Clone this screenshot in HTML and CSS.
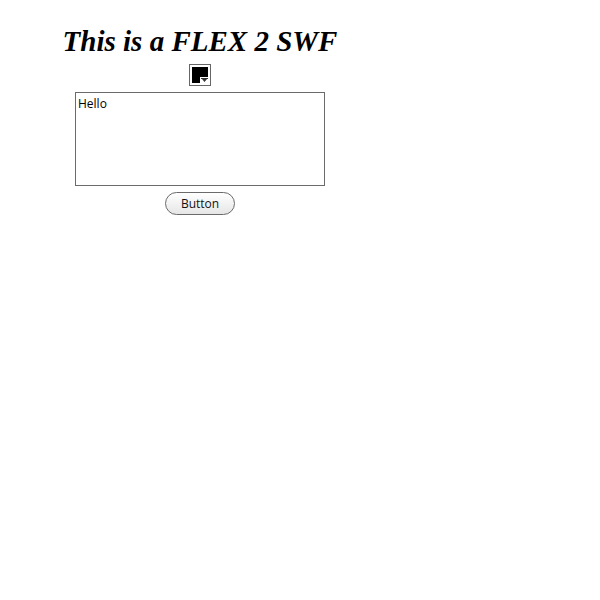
FILE: index.html
```html
<!DOCTYPE html>
<html>
<head>
<meta charset="utf-8">
<link rel="stylesheet" href="styles.css">
</head>
<body>
<div class="app">
  <h1 class="title">This is a FLEX 2 SWF</h1>
  <div class="picker">
    <div class="swatch"></div>
    <div class="corner"><svg width="7" height="4" viewBox="0 0 7 4"><path d="M0 0H7V1H6L3.5 4L1 1H0Z" fill="#333"/></svg></div>
  </div>
  <div class="textarea">Hello</div>
  <button class="btn">Button</button>
</div>
</body>
</html>
```
FILE: styles.css
```css
html, body { margin: 0; padding: 0; background: #fff; }
.app {
  width: 400px;
  display: flex;
  flex-direction: column;
  align-items: center;
  padding-top: 24px;
}
.title {
  margin: 0;
  font-family: "Liberation Serif", serif;
  font-style: italic;
  font-weight: bold;
  font-size: 29px;
  line-height: 34px;
  color: #000;
}
.picker {
  position: relative;
  margin-top: 6px;
  width: 20px;
  height: 20px;
  border: 1px solid #666;
  background: #fff;
  box-sizing: content-box;
}
.swatch {
  position: absolute;
  left: 2px; top: 2px;
  width: 16px; height: 16px;
  background: #000;
}
.corner {
  position: absolute;
  right: 2px; bottom: 2px;
  width: 8px; height: 6px;
  background: #fff;
  display: flex;
  align-items: center;
  justify-content: center;
}
.corner svg { display: block; }
.textarea {
  margin-top: 6px;
  border: 1px solid #6b6b6b;
  font-family: "Open Sans", "DejaVu Sans", sans-serif;
  font-size: 12px;
  line-height: 16px;
  padding: 3px 2px 2px;
  box-sizing: content-box;
  width: 244px;
  height: 87px;
  color: #000;
}
.btn {
  margin-top: 6px;
  width: 70px;
  height: 23px;
  border: 1px solid #6b6b6b;
  border-radius: 12px;
  background: linear-gradient(#ffffff, #e6e6e6);
  font-family: "Open Sans", "DejaVu Sans", sans-serif;
  font-size: 12px;
  color: #111;
  padding: 0;
}
```
